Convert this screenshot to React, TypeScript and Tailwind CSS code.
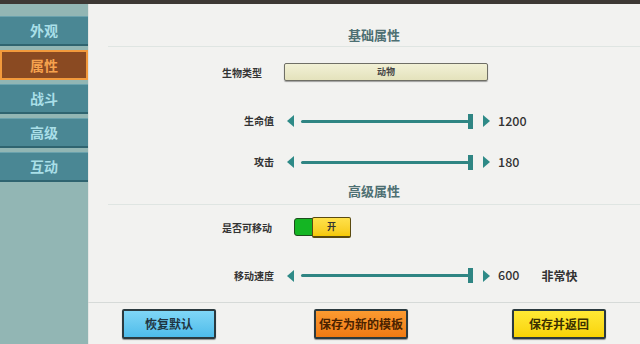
import React from "react";

const font = { fontFamily: '"Noto Sans CJK SC", "Noto Sans", sans-serif' };

function Tab({ label, active }: { label: string; active?: boolean }) {
  if (active) {
    return (
      <div className="h-[30px] w-[88px] bg-[#8a4a22] border-2 border-[#f39a3c] flex items-center justify-center text-[14px] font-semibold text-[#f6a24e]">
        {label}
      </div>
    );
  }
  return (
    <div className="h-[30px] w-[88px] bg-[#4a8794] border-b-2 border-[#2f6470] border-t border-t-[#6aa2ad] flex items-center justify-center text-[14px] font-semibold text-[#a9dfe8]">
      {label}
    </div>
  );
}

function Heading({ text, h, pb }: { text: string; h: string; pb: string }) {
  return (
    <div className={`ml-[19px] border-b border-[#dfe5e2] flex items-end justify-center ${h} ${pb}`}>
      <span className="text-[13px] font-bold text-[#4d6f72] leading-[18px]">{text}</span>
    </div>
  );
}

function Slider({ label, value, extra, h }: { label: string; value: string; extra?: string; h: string }) {
  return (
    <div className={`flex items-center ${h}`}>
      <div className="ml-[134px] w-[51px] text-right text-[10px] font-bold text-[#333] leading-none">{label}</div>
      <svg width="7" height="12" viewBox="0 0 7 12" className="ml-[13px]">
        <polygon points="7,0 7,12 0,6" fill="#2e8a87" />
      </svg>
      <div className="ml-[7px] flex items-center">
        <div className="w-[168px] h-[3px] bg-[#2f8583] rounded-full" />
        <div className="w-[5px] h-[15px] bg-[#2f8583] -ml-[1px]" />
      </div>
      <svg width="7" height="12" viewBox="0 0 7 12" className="ml-[10px]">
        <polygon points="0,0 0,12 7,6" fill="#2e8a87" />
      </svg>
      <div className="ml-[8px] text-[12.5px] text-[#333] font-medium">{value}</div>
      {extra && <div className="ml-[22px] text-[12px] font-bold text-[#333]">{extra}</div>}
    </div>
  );
}

function Btn({ text, cls }: { text: string; cls: string }) {
  return (
    <div className={`w-[94px] h-[30px] border-2 border-[#2b3a3f] rounded-[2px] flex items-center justify-center text-[12px] font-bold shadow-[0_1px_1px_rgba(0,0,0,0.4)] ${cls}`}>
      {text}
    </div>
  );
}

export default function App() {
  return (
    <div className="w-[640px] h-[344px] flex flex-col overflow-hidden bg-[#f2f2f0]" style={font}>
      <div className="h-[4px] bg-[#3d3834]" />
      <div className="flex flex-1">
        <div className="w-[88px] bg-[#92b6b4] pt-[12px] flex flex-col gap-[4px]">
          <Tab label="外观" />
          <Tab label="属性" active />
          <Tab label="战斗" />
          <Tab label="高级" />
          <Tab label="互动" />
        </div>
        <div className="flex-1 flex flex-col bg-[#f2f2f0] border-l border-[#e4e6e4]">
          <Heading text="基础属性" h="h-[43px]" pb="pb-[2px]" />
          <div className="h-[50px] flex items-center">
            <div className="ml-[133px] w-[62px] text-[10px] font-bold text-[#333]">生物类型</div>
            <div className="w-[204px] h-[18px] border border-[#6f6f66] rounded-[2px] bg-gradient-to-b from-[#f2f1d6] to-[#e4e2bc] shadow-[0_1px_1px_rgba(0,0,0,0.35)] flex items-center justify-center text-[9px] font-bold text-[#444]">
              动物
            </div>
          </div>
          <Slider label="生命值" value="1200" h="h-[48px]" />
          <Slider label="攻击" value="180" h="h-[34px]" />
          <Heading text="高级属性" h="h-[26px]" pb="pb-[4px]" />
          <div className="h-[44px] flex items-center">
            <div className="ml-[133px] w-[72px] text-[10px] font-bold text-[#333]">是否可移动</div>
            <div className="flex items-center">
              <div className="w-[19px] h-[18px] bg-[#14b523] border border-[#1d4d1d] rounded-l-[3px]" />
              <div className="w-[39px] h-[21px] bg-gradient-to-b from-[#ffe14a] to-[#f6c900] border border-[#5a4a10] border-b-2 rounded-[2px] -ml-[1px] flex items-center justify-center text-[9px] font-bold text-[#333]">
                开
              </div>
            </div>
          </div>
          <Slider label="移动速度" value="600" extra="非常快" h="h-[53px]" />
          <div className="flex-1 border-t border-[#d6dad8] -ml-[1px] flex items-start pt-[6px]">
            <div className="ml-[34px]">
              <Btn text="恢复默认" cls="bg-gradient-to-b from-[#7fd6f6] to-[#4dbcea] text-[#1f3440]" />
            </div>
            <div className="ml-[98px]">
              <Btn text="保存为新的模板" cls="bg-gradient-to-b from-[#fb9a30] to-[#ef7a12] text-[#4a2200]" />
            </div>
            <div className="ml-[104px]">
              <Btn text="保存并返回" cls="bg-gradient-to-b from-[#ffe933] to-[#f9d400] text-[#3a3000]" />
            </div>
          </div>
        </div>
      </div>
    </div>
  );
}
